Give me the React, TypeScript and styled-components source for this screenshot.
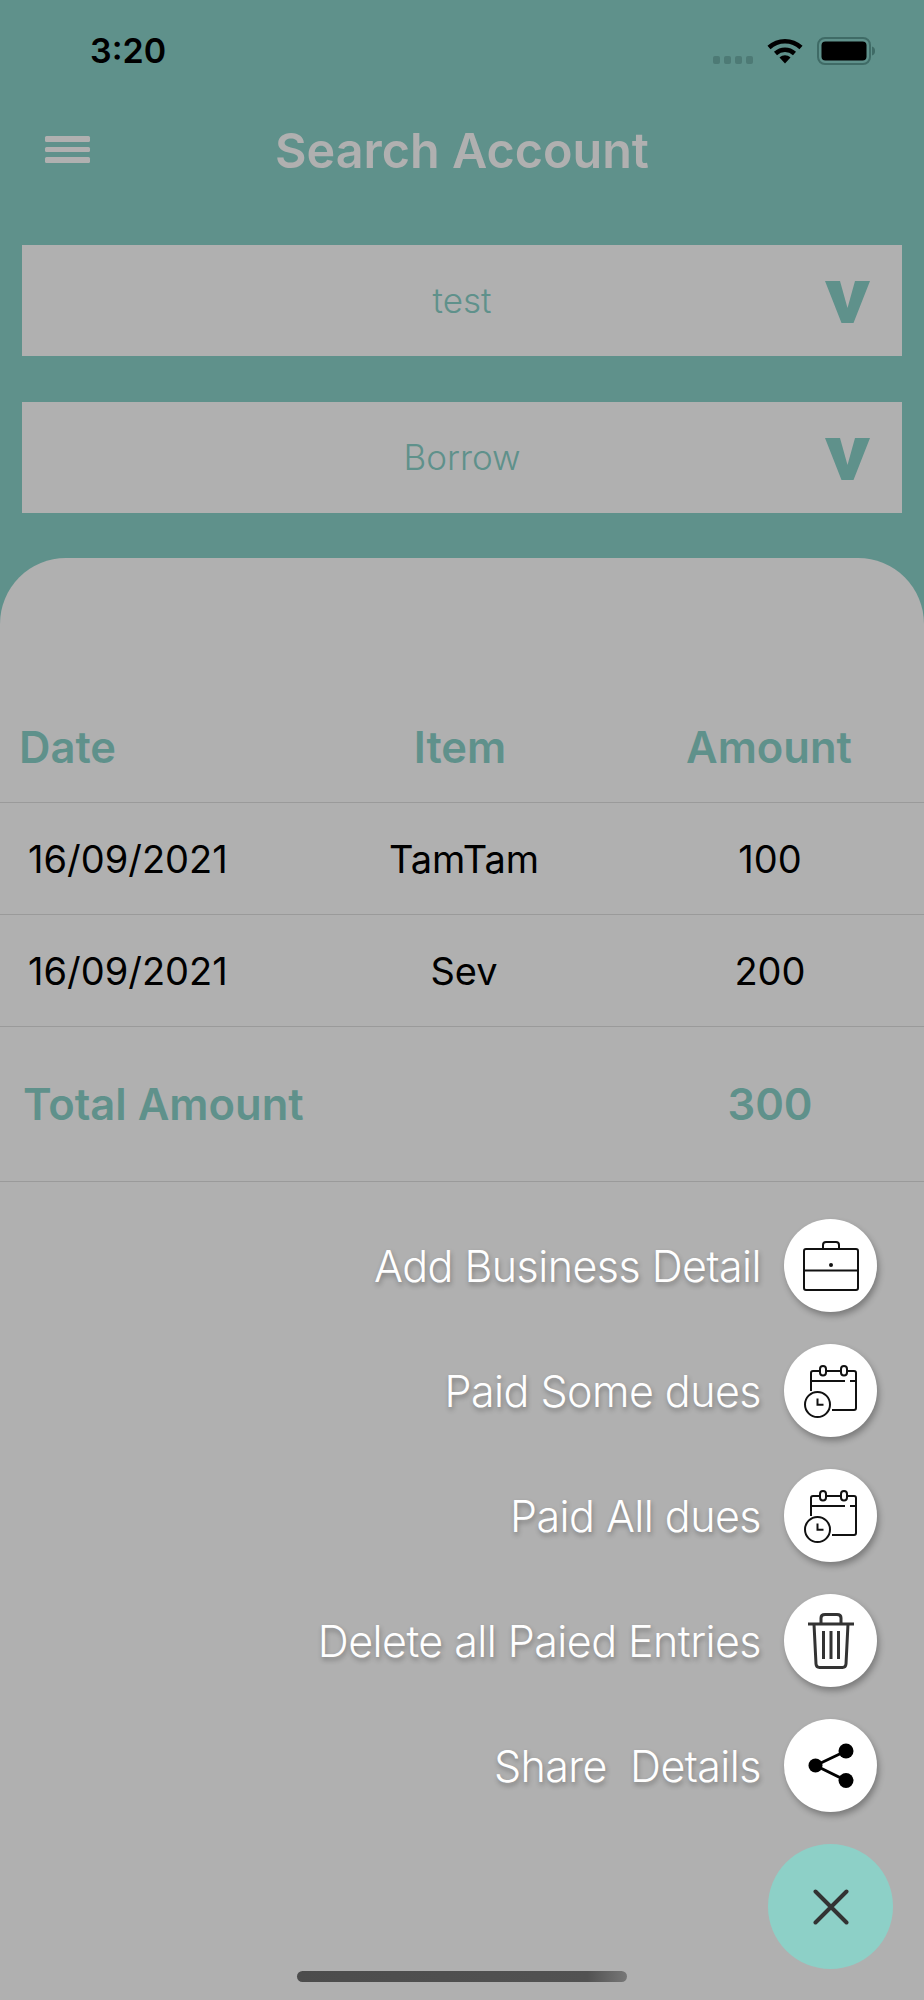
import styled, { createGlobalStyle } from 'styled-components'

const TEAL = '#5f918b'
const GRAY = '#b0b0b0'

const GlobalStyle = createGlobalStyle`
  html, body {
    margin: 0;
    padding: 0;
    background: ${TEAL};
  }
  * {
    box-sizing: border-box;
  }
`

const Screen = styled.div`
  width: 924px;
  height: 2000px;
  overflow: hidden;
  display: flex;
  flex-direction: column;
  background: ${TEAL};
  font-family: Inter, 'Liberation Sans', sans-serif;
`

const StatusBar = styled.div`
  height: 100px;
  padding: 29px 47px 0 90px;
  display: flex;
  justify-content: space-between;
  align-items: flex-start;
`

const Time = styled.span`
  font-size: 34px;
  line-height: 44px;
  font-weight: 600;
  color: #000;
`

const StatusIcons = styled.div`
  display: flex;
  align-items: flex-start;
  margin-top: 8px;
`

const SignalDots = styled.div`
  display: flex;
  gap: 3.5px;
  margin: 19px 14px 0 0;
`

const SignalDot = styled.span`
  width: 7.5px;
  height: 7.5px;
  border-radius: 2px;
  background: #4d7a75;
`

const Header = styled.div`
  height: 100px;
  display: flex;
  align-items: center;
  justify-content: center;
  position: relative;
`

const MenuButton = styled.div`
  position: absolute;
  left: 45px;
  top: 36px;
  width: 45px;
  display: flex;
  flex-direction: column;
  gap: 5px;
`

const MenuLine = styled.span`
  height: 5.5px;
  border-radius: 1.5px;
  background: ${GRAY};
`

const Title = styled.h1`
  margin: 0;
  font-size: 48.5px;
  font-weight: 600;
  color: ${GRAY};
`

const Selects = styled.div`
  margin-top: 45px;
  padding: 0 22px;
  display: flex;
  flex-direction: column;
  gap: 46px;
`

const Select = styled.div`
  height: 111px;
  background: ${GRAY};
  display: flex;
  align-items: center;
  justify-content: center;
  position: relative;
`

const SelectText = styled.span`
  font-size: 35px;
  line-height: 42px;
  margin-bottom: 2px;
  font-weight: 300;
  color: ${TEAL};
`

const Chevron = styled.svg`
  position: absolute;
  right: 32px;
  top: 36px;
  width: 45px;
  height: 42px;
`

const Sheet = styled.div`
  flex: 1;
  margin-top: 45px;
  background: ${GRAY};
  border-radius: 66px 66px 0 0;
  display: flex;
  flex-direction: column;
  position: relative;
`

const Row = styled.div<{ $height: number; $pad?: number }>`
  height: ${(p) => p.$height}px;
  padding-top: ${(p) => p.$pad || 0}px;
  display: grid;
  grid-template-columns: 308px 308px 308px;
  align-items: center;
  border-bottom: 1.5px solid #9a9a9a;
`

const HeadCell = styled.span<{ $left?: number; $shift?: number }>`
  font-size: 43.5px;
  font-weight: 600;
  color: ${TEAL};
  text-align: ${(p) => (p.$left ? 'left' : 'center')};
  padding-left: ${(p) => p.$left || 0}px;
  padding-right: ${(p) => p.$shift || 0}px;
`

const Cell = styled.span<{ $left?: number; $shift?: number }>`
  font-size: 38px;
  font-weight: 400;
  color: #000;
  text-align: ${(p) => (p.$left ? 'left' : 'center')};
  padding-left: ${(p) => p.$left || p.$shift || 0}px;
`

const Actions = styled.div`
  margin-top: 37px;
  padding-right: 47px;
  display: flex;
  flex-direction: column;
  align-items: flex-end;
  gap: 32px;
`

const Action = styled.div`
  display: flex;
  align-items: center;
  gap: 23px;
`

const ActionLabel = styled.span`
  font-size: 43px;
  font-weight: 300;
  letter-spacing: -0.55px;
  color: #fff;
  text-shadow: 1px 3px 5px rgba(0, 0, 0, 0.3);
  white-space: pre;
`

const ActionCircle = styled.div`
  width: 93px;
  height: 93px;
  border-radius: 50%;
  background: #fff;
  display: flex;
  align-items: center;
  justify-content: center;
  box-shadow: 2px 4px 6px rgba(0, 0, 0, 0.3);
`

const CloseFab = styled.div`
  align-self: flex-end;
  margin: 32px 31px 0 0;
  width: 125px;
  height: 125px;
  border-radius: 50%;
  background: #8dd0c7;
  display: flex;
  align-items: center;
  justify-content: center;
`

const HomeBar = styled.div`
  position: absolute;
  left: 297px;
  bottom: 18px;
  width: 330px;
  height: 11px;
  border-radius: 6px;
  background: linear-gradient(90deg, #4c4c4c, #525252 88%, #777);
`

const WifiIcon = () => (
  <svg width="36" height="27" viewBox="0 0 36 27">
    <path d="M2 10.5C11 2 25 2 34 10.5" fill="none" stroke="#000" strokeWidth="4.5" />
    <path d="M8.5 16.5C14 11.5 22 11.5 27.5 16.5" fill="none" stroke="#000" strokeWidth="4.5" />
    <path d="M12.5 20.5L18 26.5L23.5 20.5C20 17.5 16 17.5 12.5 20.5Z" fill="#000" />
  </svg>
)

const BatteryIcon = () => (
  <svg width="60" height="28" viewBox="0 0 60 28" style={{ marginLeft: 14 }}>
    <rect x="1" y="1" width="52" height="26" rx="7" fill="none" stroke="#3f6b66" strokeWidth="2" />
    <rect x="4.5" y="4.5" width="45" height="19" rx="4" fill="#000" />
    <path d="M55 9.5C57.5 10 58 12 58 14C58 16 57.5 18 55 18.5Z" fill="#3f6b66" />
  </svg>
)

const BriefcaseIcon = () => (
  <svg width="56" height="50" viewBox="0 0 56 50" fill="none" stroke="#111" strokeWidth="2">
    <rect x="1" y="8" width="54" height="41" rx="2" />
    <path d="M20 8V4C20 2 21 1 23 1H33C35 1 36 2 36 4V8" />
    <path d="M1 29.5H55" />
    <circle cx="28" cy="24" r="2" fill="#111" stroke="none" />
  </svg>
)

const CalendarClockIcon = () => (
  <svg width="54" height="54" viewBox="0 0 54 54" fill="none" stroke="#111" strokeWidth="2">
    <path d="M7 27V9C7 7.5 8 7 9 7H16M23 7H37M44 7H50C51.5 7 52 8 52 9V44C52 45.5 51.5 46 50 46H28" />
    <rect x="16" y="2" width="6" height="9.5" rx="3" />
    <rect x="37" y="2" width="6" height="9.5" rx="3" />
    <path d="M7 17H41M46 17H52" />
    <circle cx="13.5" cy="40.5" r="12.5" />
    <path d="M13.5 34.5V40.7H19.5" />
  </svg>
)

const TrashIcon = () => (
  <svg width="46" height="56" viewBox="0 0 46 56" fill="none" stroke="#333" strokeWidth="3">
    <path d="M0 11H46" />
    <path d="M13 11V5C13 2.5 14.5 1.5 17 1.5H29C31.5 1.5 33 2.5 33 5V11" />
    <path d="M6 11L8 51C8.2 53.5 9.5 54.5 11.5 54.5H34.5C36.5 54.5 37.8 53.5 38 51L40 11" />
    <path d="M15.5 18V46M23 18V46M30.5 18V46" />
  </svg>
)

const ShareIcon = () => (
  <svg width="46" height="46" viewBox="0 0 46 46">
    <path d="M7.5 22.5L38 8M7.5 22.5L38 37.5" fill="none" stroke="#000" strokeWidth="3" />
    <circle cx="7.5" cy="22.5" r="7" fill="#000" />
    <circle cx="38" cy="8" r="7.5" fill="#000" />
    <circle cx="38" cy="37.5" r="7.5" fill="#000" />
  </svg>
)

const CloseIcon = () => (
  <svg width="36" height="36" viewBox="0 0 36 36" fill="none" stroke="#333" strokeWidth="4" strokeLinecap="round">
    <path d="M2.5 2.5L33.5 33.5M33.5 2.5L2.5 33.5" />
  </svg>
)

const ChevronDown = () => (
  <Chevron viewBox="0 0 45 42">
    <path d="M0 0H15L22.5 27L30 0H45L28.5 42H16.5Z" fill={TEAL} />
  </Chevron>
)

const actions = [
  { label: 'Add Business Detail', icon: <BriefcaseIcon /> },
  { label: 'Paid Some dues', icon: <CalendarClockIcon /> },
  { label: 'Paid All dues', icon: <CalendarClockIcon /> },
  { label: 'Delete all Paied Entries', icon: <TrashIcon /> },
  { label: 'Share  Details', icon: <ShareIcon /> }
]

const entries = [
  { date: '16/09/2021', item: 'TamTam', amount: '100' },
  { date: '16/09/2021', item: 'Sev', amount: '200' }
]

const App = () => {
  return (
    <>
      <GlobalStyle />
      <Screen>
        <StatusBar>
          <Time>3:20</Time>
          <StatusIcons>
            <SignalDots>
              <SignalDot />
              <SignalDot />
              <SignalDot />
              <SignalDot />
            </SignalDots>
            <WifiIcon />
            <BatteryIcon />
          </StatusIcons>
        </StatusBar>
        <Header>
          <MenuButton>
            <MenuLine />
            <MenuLine />
            <MenuLine />
          </MenuButton>
          <Title>Search Account</Title>
        </Header>
        <Selects>
          <Select>
            <SelectText>test</SelectText>
            <ChevronDown />
          </Select>
          <Select>
            <SelectText>Borrow</SelectText>
            <ChevronDown />
          </Select>
        </Selects>
        <Sheet>
          <Row $height={245} $pad={133}>
            <HeadCell $left={19}>Date</HeadCell>
            <HeadCell $shift={4}>Item</HeadCell>
            <HeadCell $shift={2}>Amount</HeadCell>
          </Row>
          {entries.map((e) => (
            <Row key={e.item} $height={112}>
              <Cell $left={28}>{e.date}</Cell>
              <Cell $shift={4}>{e.item}</Cell>
              <Cell>{e.amount}</Cell>
            </Row>
          ))}
          <Row $height={155}>
            <HeadCell $left={23}>Total Amount</HeadCell>
            <span />
            <HeadCell>300</HeadCell>
          </Row>
          <Actions>
            {actions.map((a) => (
              <Action key={a.label}>
                <ActionLabel>{a.label}</ActionLabel>
                <ActionCircle>{a.icon}</ActionCircle>
              </Action>
            ))}
          </Actions>
          <CloseFab>
            <CloseIcon />
          </CloseFab>
          <HomeBar />
        </Sheet>
      </Screen>
    </>
  )
}

export default App
